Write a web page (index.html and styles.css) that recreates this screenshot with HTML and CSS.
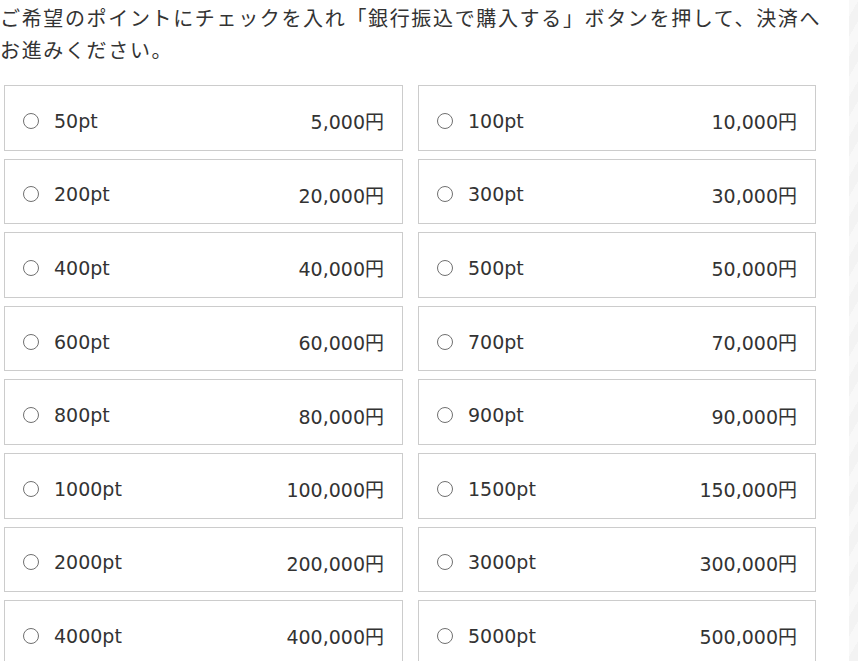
FILE: index.html
```html
<!DOCTYPE html>
<html lang="ja">
<head>
<meta charset="utf-8">
<link rel="stylesheet" href="styles.css">
</head>
<body>
<div class="page">
  <main class="content">
    <p class="lead">ご希望のポイントにチェックを入れ「銀行振込で購入する」ボタンを押して、決済へお進みください。</p>
    <div class="grid">
      <label class="opt"><span class="radio"></span><span class="pt">50pt</span><span class="yen">5,000円</span></label>
      <label class="opt"><span class="radio"></span><span class="pt">100pt</span><span class="yen">10,000円</span></label>
      <label class="opt"><span class="radio"></span><span class="pt">200pt</span><span class="yen">20,000円</span></label>
      <label class="opt"><span class="radio"></span><span class="pt">300pt</span><span class="yen">30,000円</span></label>
      <label class="opt"><span class="radio"></span><span class="pt">400pt</span><span class="yen">40,000円</span></label>
      <label class="opt"><span class="radio"></span><span class="pt">500pt</span><span class="yen">50,000円</span></label>
      <label class="opt"><span class="radio"></span><span class="pt">600pt</span><span class="yen">60,000円</span></label>
      <label class="opt"><span class="radio"></span><span class="pt">700pt</span><span class="yen">70,000円</span></label>
      <label class="opt"><span class="radio"></span><span class="pt">800pt</span><span class="yen">80,000円</span></label>
      <label class="opt"><span class="radio"></span><span class="pt">900pt</span><span class="yen">90,000円</span></label>
      <label class="opt"><span class="radio"></span><span class="pt">1000pt</span><span class="yen">100,000円</span></label>
      <label class="opt"><span class="radio"></span><span class="pt">1500pt</span><span class="yen">150,000円</span></label>
      <label class="opt"><span class="radio"></span><span class="pt">2000pt</span><span class="yen">200,000円</span></label>
      <label class="opt"><span class="radio"></span><span class="pt">3000pt</span><span class="yen">300,000円</span></label>
      <label class="opt"><span class="radio"></span><span class="pt">4000pt</span><span class="yen">400,000円</span></label>
      <label class="opt"><span class="radio"></span><span class="pt">5000pt</span><span class="yen">500,000円</span></label>
    </div>
  </main>
  <div class="side"></div>
</div>
</body>
</html>
```
FILE: styles.css
```css
html, body {
  margin: 0;
  padding: 0;
  height: 100%;
  overflow: hidden;
}
body {
  font-family: "DejaVu Sans", "Noto Sans CJK JP", sans-serif;
  color: #333;
  background: #fff;
}
.page {
  display: flex;
  height: 100%;
}
.content {
  width: 849px;
  flex: none;
  background: #fff;
}
.side {
  flex: 1;
  background: repeating-linear-gradient(-60deg, #f3f3f3 0 10px, #f8f8f8 10px 20px);
}
.lead {
  margin: 2px 0 0 0;
  width: 830px;
  font-family: "Noto Sans CJK JP", sans-serif;
  font-size: 20px;
  letter-spacing: 1.65px;
  line-height: 32px;
  color: #333;
}
.grid {
  display: grid;
  grid-template-columns: 399px 398px;
  column-gap: 15px;
  row-gap: 8px;
  margin: 19px 0 0 4px;
}
.opt {
  display: flex;
  align-items: center;
  box-sizing: border-box;
  height: 65.6px;
  border: 1px solid #ccc;
  padding: 6px 18px 0 18px;
  font-size: 19px;
  color: #333;
}
.radio {
  width: 16px;
  height: 16px;
  box-sizing: border-box;
  border: 1.3px solid #707070;
  border-radius: 50%;
  margin: 0;
  flex: none;
}
.pt {
  margin-left: 15px;
  flex: 1;
}
.yen {
  text-align: right;
}
```
